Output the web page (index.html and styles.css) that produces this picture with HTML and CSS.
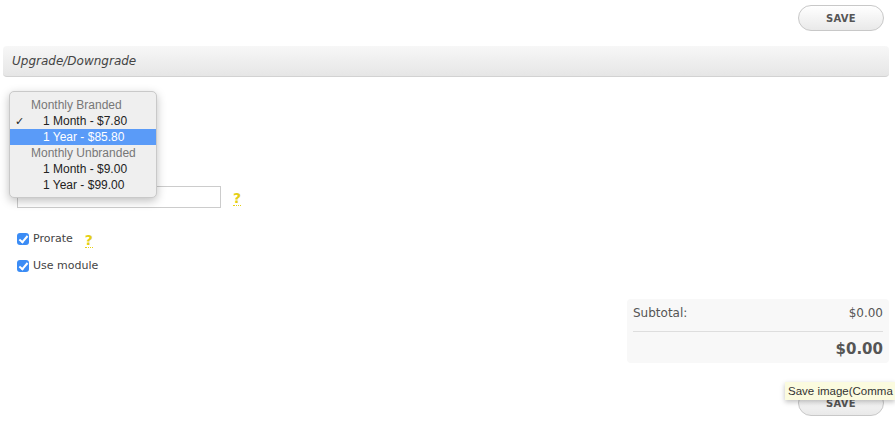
FILE: index.html
```html
<!DOCTYPE html>
<html lang="en">
<head>
    <meta charset="UTF-8">
    <title>Upgrade/Downgrade</title>
    <link rel="stylesheet" href="styles.css">
</head>
<body>
    <div class="actions top">
        <button class="save-btn">SAVE</button>
    </div>

    <div class="section-head">Upgrade/Downgrade</div>

    <div class="form">
        <div class="row select-row">
            <ul class="menu">
                <li class="group">Monthly Branded</li>
                <li class="opt checked">1 Month - $7.80</li>
                <li class="opt active">1 Year - $85.80</li>
                <li class="group">Monthly Unbranded</li>
                <li class="opt">1 Month - $9.00</li>
                <li class="opt">1 Year - $99.00</li>
            </ul>
        </div>

        <div class="row input-row">
            <input type="text" class="text-input">
            <span class="help">?</span>
        </div>

        <label class="check-row">
            <span class="check"></span>
            <span>Prorate</span>
            <span class="help">?</span>
        </label>
        <label class="check-row">
            <span class="check"></span>
            <span>Use module</span>
        </label>
    </div>

    <div class="totals">
        <div class="line">
            <span>Subtotal:</span>
            <span>$0.00</span>
        </div>
        <div class="line total">
            <span></span>
            <span>$0.00</span>
        </div>
    </div>

    <div class="actions bottom">
        <button class="save-btn">SAVE</button>
        <div class="tooltip">Save image(Comma</div>
    </div>
</body>
</html>
```

FILE: styles.css
```css
body {
    margin: 0;
    font-family: "DejaVu Sans", Verdana, sans-serif;
    font-size: 11px;
    color: #444;
    background: #fff;
    position: relative;
    width: 895px;
    height: 423px;
    overflow: hidden;
}
.actions {
    display: flex;
    justify-content: flex-end;
    padding-right: 11px;
    position: relative;
}
.actions.top {
    padding-top: 5px;
}
.actions.bottom {
    margin-top: 27px;
}
.save-btn {
    width: 86px;
    height: 26px;
    border: 1px solid #c8c8c8;
    border-radius: 13px;
    background: linear-gradient(#ffffff, #e9e9e9);
    font-family: "DejaVu Sans", Verdana, sans-serif;
    font-size: 10px;
    font-weight: bold;
    color: #555;
    letter-spacing: 0.3px;
    cursor: pointer;
}
.section-head {
    margin: 15px 6px 0 3px;
    height: 30px;
    line-height: 30px;
    padding-left: 9px;
    border-radius: 4px;
    border-bottom: 1px solid #d2d2d2;
    background: linear-gradient(#f7f7f7, #e6e6e6);
    font-style: italic;
    font-size: 12px;
    color: #444;
}
.form {
    padding-left: 17px;
}
.row {
    position: relative;
}
.select-row {
    height: 109px;
}
.menu {
    position: absolute;
    left: -8px;
    top: 14px;
    width: 146px;
    margin: 0;
    padding: 5px 0 4px;
    list-style: none;
    background: #efefef;
    border: 1px solid #c9c9c9;
    border-radius: 5px;
    box-shadow: 0 3px 10px rgba(0, 0, 0, 0.25);
    font-family: "Liberation Sans", Arial, sans-serif;
    font-size: 12px;
    z-index: 2;
}
.menu li {
    height: 16px;
    line-height: 16px;
    color: #222;
    position: relative;
}
.menu .group {
    padding-left: 21px;
    color: #777;
}
.menu .opt {
    padding-left: 33px;
}
.menu .checked::before {
    content: "\2713";
    position: absolute;
    left: 5px;
    font-size: 11px;
}
.menu .active {
    background: #5a9bf8;
    color: #fff;
}
.input-row {
    display: flex;
    align-items: center;
    gap: 12px;
    height: 22px;
}
.text-input {
    width: 204px;
    height: 22px;
    box-sizing: border-box;
    border: 1px solid #ccc;
    margin: 0;
}
.help {
    color: #e5cf14;
    font-weight: bold;
    font-size: 14px;
    border-bottom: 1px dotted #e5cf14;
    line-height: 13px;
    margin-top: 4px;
}
.check-row {
    display: flex;
    align-items: center;
    gap: 4px;
    height: 13px;
    margin-top: 24px;
}
.check-row + .check-row {
    margin-top: 14px;
}
.check-row .help {
    margin-left: 8px;
}
.check {
    width: 12px;
    height: 12px;
    border-radius: 3px;
    background: #3b8cf5;
    position: relative;
}
.check::after {
    content: "";
    position: absolute;
    left: 4px;
    top: 1px;
    width: 3px;
    height: 7px;
    border: solid #fff;
    border-width: 0 2px 2px 0;
    transform: rotate(40deg);
}
.totals {
    margin: 27px 6px 0 auto;
    width: 262px;
    box-sizing: border-box;
    padding: 0 6px;
    background: #f8f8f8;
    border-radius: 4px;
    font-size: 12px;
    color: #555;
}
.totals .line {
    display: flex;
    justify-content: space-between;
    height: 32px;
    line-height: 28px;
}
.totals .line.total {
    border-top: 1px solid #dedede;
    font-size: 15px;
    font-weight: bold;
    line-height: 34px;
    height: 31px;
}
.tooltip {
    position: absolute;
    left: 785px;
    right: 0;
    top: -8px;
    height: 18px;
    line-height: 18px;
    padding: 0 0 0 3px;
    white-space: nowrap;
    background: #fbfbdf;
    box-shadow: 0 2px 5px rgba(0, 0, 0, 0.25);
    font-family: "Liberation Sans", Arial, sans-serif;
    font-size: 11.5px;
    color: #333;
}
```
